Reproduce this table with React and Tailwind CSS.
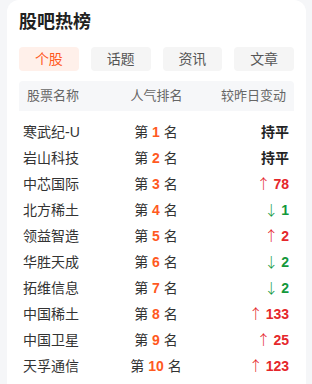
import React, { useState } from 'react';

const tabs = ['个股', '话题', '资讯', '文章'];

const rows = [
  { name: '寒武纪-U', rank: 1, change: 'flat' },
  { name: '岩山科技', rank: 2, change: 'flat' },
  { name: '中芯国际', rank: 3, change: 'up', value: 78 },
  { name: '北方稀土', rank: 4, change: 'down', value: 1 },
  { name: '领益智造', rank: 5, change: 'up', value: 2 },
  { name: '华胜天成', rank: 6, change: 'down', value: 2 },
  { name: '拓维信息', rank: 7, change: 'down', value: 2 },
  { name: '中国稀土', rank: 8, change: 'up', value: 133 },
  { name: '中国卫星', rank: 9, change: 'up', value: 25 },
  { name: '天孚通信', rank: 10, change: 'up', value: 123 },
];

const Change = ({ row }) => {
  if (row.change === 'flat') {
    return <span className="font-bold text-[#222]">持平</span>;
  }
  const up = row.change === 'up';
  return (
    <span className={up ? 'text-[#e5272b]' : 'text-[#14983c]'}>
      <span className="font-['Noto_Sans_CJK_SC'] font-light">{up ? '↑' : '↓'}</span>
      <span className="ml-[3px] font-bold">{row.value}</span>
    </span>
  );
};

const App = () => {
  const [active, setActive] = useState(0);

  return (
    <div
      className="min-h-screen w-[312px] bg-[#f5f6f8] pl-[7px]"
      style={{ fontFamily: '"Liberation Sans", "Noto Sans CJK SC", sans-serif' }}
    >
      <div className="h-[384px] w-[299px] rounded-t-[12px] bg-white px-3 pt-[9px]">
        <h2 className="text-[18px] font-bold leading-[26px] text-[#222]">股吧热榜</h2>

        {/* Tabs */}
        <div className="mt-[12px] grid grid-cols-4 gap-3">
          {tabs.map((t, i) => (
            <button
              key={t}
              onClick={() => setActive(i)}
              className={`h-6 rounded-[4px] text-[14px] leading-6 ${
                i === active ? 'bg-[#fff0ea] text-[#ff5a1f]' : 'bg-[#f5f5f5] text-[#555]'
              }`}
            >
              {t}
            </button>
          ))}
        </div>

        {/* Table header */}
        <div className="mt-[10px] grid h-[30px] grid-cols-3 items-center rounded-t-[4px] bg-[#f6f7f9] px-2 text-[13px] text-[#666]">
          <span>股票名称</span>
          <span className="text-center">人气排名</span>
          <span className="text-right">较昨日变动</span>
        </div>

        {/* Rows */}
        <div className="pt-2">
          {rows.map((r) => (
            <div
              key={r.rank}
              className="grid h-[26px] grid-cols-3 items-center pl-1 pr-[5px] text-[14px] text-[#333]"
            >
              <span>{r.name}</span>
              <span className="text-center">
                第 <span className="font-bold text-[#ff5a1f]">{r.rank}</span> 名
              </span>
              <span className="text-right">
                <Change row={r} />
              </span>
            </div>
          ))}
        </div>
      </div>
    </div>
  );
};

export default App;
